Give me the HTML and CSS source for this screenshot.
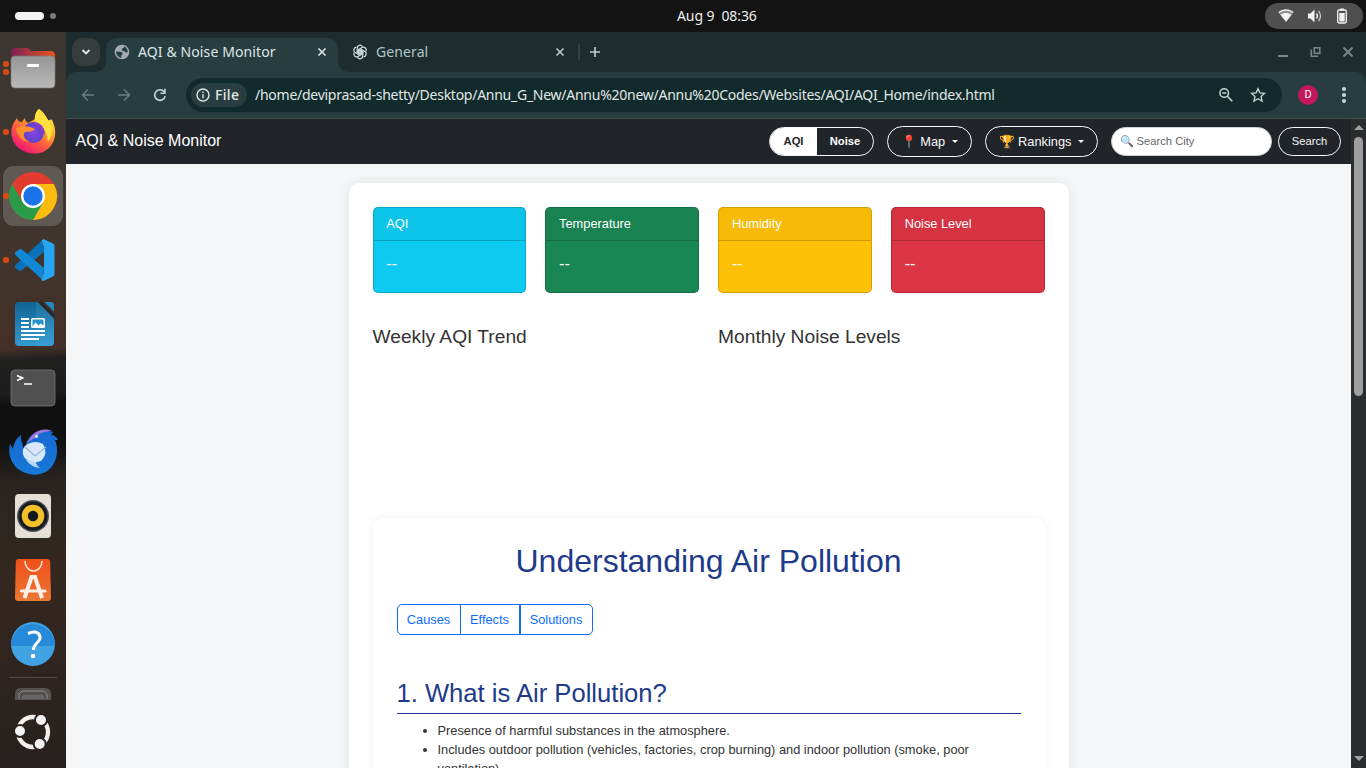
FILE: index.html
```html
<!DOCTYPE html>
<html lang="en">
<head>
<meta charset="utf-8">
<title>AQI &amp; Noise Monitor</title>
<link rel="stylesheet" href="styles.css">
</head>
<body>
<div class="desktop">
  <header class="topbar">
    <div class="workspaces"><span class="ws-active"></span><span class="ws-dot"></span></div>
    <div class="clock">Aug 9&nbsp; 08:36</div>
    <div class="tray">
      <svg width="16" height="14" viewBox="0 0 16 14"><path d="M.5 3.8C4.5.2 11.500.2 15.500 3.800L8 13Z" fill="#8d8d8d"/><path d="M.8 3.500C4.800.200 11.200.200 15.200 3.500" fill="none" stroke="#f2f2f2" stroke-width="1.400"/><path d="M2.500 5.800C5.500 3.300 10.500 3.300 13.500 5.800L8 12.800Z" fill="#f2f2f2"/></svg>
      <svg width="16" height="16" viewBox="0 0 16 16" fill="none" stroke="#f2f2f2" stroke-width="1.300"><path d="M1 5.500h2.500L7.500 1.500v13L3.500 10.500H1Z" fill="#f2f2f2" stroke="none"/><path d="M9.500 5.500q2 2.500 0 5"/><path d="M11.500 2.800q4 5.200 0 10.400" opacity=".75"/></svg>
      <svg width="12" height="16" viewBox="0 0 12 16"><path d="M4 .5h4v2H4z" fill="#f2f2f2"/><rect x="1.700" y="2" width="8.600" height="13" rx="1.500" fill="none" stroke="#f2f2f2" stroke-width="1.300"/><rect x="3.300" y="5" width="5.400" height="8.500" fill="#f2f2f2"/></svg>
    </div>
  </header>

  <div class="workspace">
    <nav class="dock">
      <div class="app run2"><svg viewBox="0 0 60 60">
        <defs><linearGradient id="fo"><stop stop-color="#7b2152"/><stop offset="1" stop-color="#e95420"/></linearGradient><linearGradient id="fg" x2="0" y2="1"><stop stop-color="#969696"/><stop offset="1" stop-color="#b9b9b9"/></linearGradient></defs>
        <path d="M8 14q0-4 4-4h13l3 3h20q4 0 4 5v8H8Z" fill="url(#fo)"/><rect x="8" y="18" width="44" height="32" rx="4" fill="url(#fg)" stroke="#7f7c7a" stroke-width=".7"/><rect x="24" y="26" width="12" height="3" rx="1.200" fill="#fff"/></svg></div>
      <div class="app run"><svg viewBox="0 0 60 60">
        <defs><linearGradient id="ff" x1=".9" y1=".1" x2=".3" y2="1"><stop stop-color="#fff04a"/><stop offset=".3" stop-color="#ffb52e"/><stop offset=".6" stop-color="#ff633b"/><stop offset="1" stop-color="#f01477"/></linearGradient><radialGradient id="fp"><stop stop-color="#8845e6"/><stop offset="1" stop-color="#5b43c5"/></radialGradient></defs>
        <g transform="translate(-1 -1)"><path d="M37 8C42 12 44 16 46 19C49 20 49 17 50 19C57 33 52 46 41 51C27 56 12 48 10 36C8 28 11 22 15 17C16 20 17 21 20 21C21 19 22 18 23 17C23 19 24 21 26 22C30 20 31 19 33 18C33 14 34 10 37 8Z" fill="url(#ff)"/>
        <path d="M37 8C43 12 44 16 46 19C50 24 52 33 46 41C45 30 41 25 33 20C32 16 34 10 37 8Z" fill="#ffe040"/>
        <circle cx="31.500" cy="31.500" r="10.500" fill="url(#fp)"/>
        <path d="M14 27C20 24 28 25 33 28C30 32 26 30 23 31C20 34 23 39 28 41C20 41 15 35 14 27Z" fill="#ff8f2a"/><path d="M31 22C38 21 43 26 43 34C40 29 37 26 31 22Z" fill="#9038c8"/></g></svg></div>
      <div class="app run focused"><svg viewBox="0 0 60 60">
        <circle cx="30" cy="30" r="24" fill="#e33b2e"/><path d="M30 18H50.800A24 24 0 0 1 30 54Z" fill="#fbbc0f"/><path d="M9.200 18A24 24 0 0 0 30 54L40.400 36L19.600 36Z" fill="#2a9b48"/><circle cx="30" cy="30" r="12" fill="#fff"/><circle cx="30" cy="30" r="9.700" fill="#1a73e8"/></svg></div>
      <div class="app run"><svg viewBox="0 0 60 60">
        <path d="M40 9.500L12.500 35q-1.500 1.500 0 3L16 40.500q1.200 1 2.500 0L41 22Z" fill="#0a72bb"/><path d="M40 50.500L12.500 25q-1-1.500 0-3L16 19.500q1.500-1 3 0L41 38Z" fill="#1088d4"/><path d="M40.500 9L50 13.500q1.500.7 1.500 2.500v28q0 1.800-1.500 2.500L40.500 51q-1.500 0-2-1L41 43V17L38.500 10.500Z" fill="#28a4f2"/></svg></div>
      <div class="app"><svg viewBox="0 0 60 60">
        <defs><linearGradient id="wd" x2="0" y2="1"><stop stop-color="#116494"/><stop offset="1" stop-color="#339bd0"/></linearGradient></defs>
        <path d="M16 8H34L51 25V48q0 4-4 4H16q-4 0-4-4V12q0-4 4-4Z" fill="url(#wd)"/><path d="M33 8h2.500L51 23.500V48q0 4-4 4H33Z" fill="#52addc" opacity=".2"/><path d="M34.500 7.500L51.500 24.500V21L38.500 8Z" fill="#1c2a33"/><path d="M41.500 8h6q3.500 0 3.500 3.500v6Z" fill="#2389c2"/><path d="M18 25h8M18 29h8M18 33h8M18 37h24M18 41h24M18 45h18" stroke="#fff" stroke-width="2"/><rect x="28" y="24" width="14" height="10" rx="1.500" fill="#fff"/><path d="M29.500 32.500V25.500H40.500v6l-3-2-2 2-3-3Z" fill="#2594cc"/></svg></div>
      <div class="app"><svg viewBox="0 0 60 60">
        <rect x="8" y="12" width="44" height="36" rx="4" fill="#505050" stroke="#737373" stroke-width=".8"/><path d="M14 17.500l5.500 2.500-5.500 2.500M21 26h8" fill="none" stroke="#fff" stroke-width="1.700"/></svg></div>
      <div class="app"><svg viewBox="0 0 60 60">
        <defs><linearGradient id="tb" x2="0" y2="1"><stop stop-color="#1769d2"/><stop offset="1" stop-color="#1778d8"/></linearGradient></defs>
        <path d="M23 23C26 11 38 5 50 10L48 13C51 13 54 15 55 18L52 18C55 25 55 35 50 43C44 52 33 55 23 51C10 47 4 34 7 22L10 27C11 19 15 15 18 13C17 19 20 20 20 26L24 22Z" fill="url(#tb)"/>
        <path d="M26 18C30 9 41 5 49 9C42 9 36 11 32 16L23 21Q24 19 26 18Z" fill="#9878dc"/><path d="M22 24Q31 17 40 22Q46 31 38 39Q27 43 21 35Q18 29 22 24Z" fill="#d9e9fa"/><path d="M22 25l10 9 11-9" fill="none" stroke="#95b5da" stroke-width="1.300"/><path d="M23 38Q28 45 37 46Q33 43 33 40Z" fill="#b9d6f7"/><circle cx="33.500" cy="14.500" r="1.400" fill="#fff"/></svg></div>
      <div class="app"><svg viewBox="0 0 60 60">
        <rect x="12" y="8" width="36" height="44" rx="4" fill="#e4e0d5"/><circle cx="30" cy="30" r="16" fill="#4a4c52"/><circle cx="30" cy="30" r="14.500" fill="#171a20"/><circle cx="30" cy="30" r="11.300" fill="#f1c129"/><circle cx="30" cy="30" r="5.200" fill="#16181c"/></svg></div>
      <div class="app"><svg viewBox="0 0 60 60">
        <defs><linearGradient id="bg" x2="0" y2="1"><stop stop-color="#f04f19"/><stop offset="1" stop-color="#e97835"/></linearGradient></defs>
        <path d="M16 9H44q3 0 3.200 3L48 48q0 3-3 3H15q-3 0-3-3L12.800 12q.2-3 3.200-3Z" fill="url(#bg)"/><path d="M22 11a8.500 10 0 0 0 17 0" fill="none" stroke="#ffe4d4" stroke-width="1.600"/><path d="M21.500 48L28.500 27h3.500L39 48" fill="none" stroke="#fff1e7" stroke-width="4"/><path d="M18.500 41H42" stroke="#fff1e7" stroke-width="3.200" stroke-linecap="round"/></svg></div>
      <div class="app"><svg viewBox="0 0 60 60">
        <circle cx="30" cy="30" r="22" fill="#3fa3e4"/><path d="M8 32a22 22 0 1 1 44 0Z" fill="#278ad8"/><path d="M25 19.500q10-4 12 3c1 6-7 7-6.500 13.500" fill="none" stroke="#fff" stroke-width="3"/><circle cx="30" cy="42" r="2.300" fill="#fff"/></svg></div>
      <div class="dock-line"></div>
      <svg class="drive" viewBox="0 0 36 12"><path d="M0 12V6q0-6 6-6H30q6 0 6 6v6Z" fill="#555350"/><path d="M4 11V6l3-3H29l3 3v5" fill="none" stroke="#8a8986" stroke-width="1"/><path d="M6 11V9l3-3H27l3 3v2" fill="#696764" stroke="#4c4a48" stroke-width="1"/></svg>
      <svg class="ubuntu" viewBox="0 0 40 40"><circle cx="20" cy="20" r="15" fill="none" stroke="#f2f0ef" stroke-width="4.300"/><g fill="#f3f3f3" stroke="#2a231f" stroke-width="2"><circle cx="7" cy="19" r="6"/><circle cx="28" cy="8" r="6"/><circle cx="26.700" cy="32" r="6"/></g></svg>
    </nav>

    <main class="browser">
      <div class="tabstrip">
        <div class="tab-search"><svg width="10" height="8" viewBox="0 0 10 8"><path d="M1.500 2L5 5.500 8.500 2" fill="none" stroke="#e3e6e6" stroke-width="1.900"/></svg></div>
        <div class="tab active">
          <svg class="fav" viewBox="1 1 22 22"><path d="M12 2C6.480 2 2 6.480 2 12s4.480 10 10 10 10-4.480 10-10S17.520 2 12 2zm-1 17.930c-3.950-.49-7-3.850-7-7.930 0-.3 0-.5.050-.8L9 11.500c2 0 4 1 4 2.500 0 1-2 2-2 3.500zM20 12c-1 1-3 .500-4-.5-1-1-3-.500-4-1.500-1-1.500 0-2 1-3 1-.8 2-1 2-2.410C17.930 5.780 20 8.650 20 12z" fill="#a3abb2"/></svg>
          <span class="tab-title t1">AQI &amp; Noise Monitor</span>
          <svg class="close" viewBox="0 0 10 10"><path d="M1.500 1.500l7 7m0-7l-7 7" stroke="#e2e8e8" stroke-width="1.600"/></svg>
        </div>
        <div class="tab">
          <svg class="fav" viewBox="0 0 16 16" fill="none" stroke="#d2dbdc" stroke-width="1.250"><g id="petal"><path d="M5.200 8V4a2.800 2.800 0 0 1 5.200-1.400M5.200 8l2.800 1.600 3.500-2"/></g><use href="#petal" transform="rotate(60 8 8)"/><use href="#petal" transform="rotate(120 8 8)"/><use href="#petal" transform="rotate(180 8 8)"/><use href="#petal" transform="rotate(240 8 8)"/><use href="#petal" transform="rotate(300 8 8)"/></svg>
          <span class="tab-title t2">General</span>
          <svg class="close" viewBox="0 0 10 10"><path d="M1.500 1.500l7 7m0-7l-7 7" stroke="#b9cdcf" stroke-width="1.500"/></svg>
        </div>
        <span class="tab-sep"></span>
        <svg class="plus" width="12" height="12" viewBox="0 0 12 12"><path d="M6 1v10M1 6h10" stroke="#c5cdcd" stroke-width="1.600"/></svg>
        <div class="win-buttons">
          <svg width="12" height="12" viewBox="0 0 12 12"><path d="M1 10h10" stroke="#77868a" stroke-width="2"/></svg>
          <svg width="12" height="12" viewBox="0 0 12 12" fill="none" stroke="#77868a" stroke-width="1.600"><rect x="4.300" y="1.800" width="5.500" height="5.500"/><path d="M1.300 3.500V10.200H8"/></svg>
          <svg width="12" height="12" viewBox="0 0 12 12"><path d="M1.500 1.500l9 9m0-9l-9 9" stroke="#77868a" stroke-width="1.900"/></svg>
        </div>
      </div>

      <div class="toolbar">
        <div class="nav-icons">
          <svg width="16" height="16" viewBox="0 0 16 16"><path d="M14 8H3M8 2.500L2.500 8 8 13.500" fill="none" stroke="#6b7c80" stroke-width="1.500"/></svg>
          <svg width="16" height="16" viewBox="0 0 16 16"><path d="M2 8h11M8 2.500L13.500 8 8 13.500" fill="none" stroke="#6b7c80" stroke-width="1.500"/></svg>
          <svg width="16" height="16" viewBox="0 0 16 16"><path d="M13.200 9.200A5.300 5.300 0 1 1 12.200 4.800" fill="none" stroke="#c3d5d7" stroke-width="1.600"/><path d="M13.700 1.800V7H8.500V5.400h3.600V1.800Z" fill="#c3d5d7"/></svg>
        </div>
        <div class="omnibox">
          <div class="chip"><svg width="14" height="14" viewBox="0 0 14 14"><circle cx="7" cy="7" r="6" fill="none" stroke="#dfe7e7" stroke-width="1.400"/><path d="M7 6.200V10.300M7 3.600V5.100" stroke="#dfe7e7" stroke-width="1.400"/></svg><span>File</span></div>
          <span class="url">/home/deviprasad-shetty/Desktop/Annu_G_New/Annu%20new/Annu%20Codes/Websites/AQI/AQI_Home/index.html</span>
          <svg width="16" height="16" viewBox="0 0 16 16" fill="none" stroke="#c3d2d3" stroke-width="1.600"><circle cx="6.200" cy="6" r="4.300"/><path d="M9.300 9.200l5 5M4.200 6h4"/></svg>
          <svg width="16" height="16" viewBox="0 0 16 16"><path d="M8 1.700l1.900 4.200 4.500.5-3.300 3.100.9 4.600L8 11.700l-4 2.400.9-4.600L1.600 6.400l4.500-.5Z" fill="none" stroke="#c3d2d3" stroke-width="1.400"/></svg>
        </div>
        <div class="avatar">D</div>
        <div class="kebab"><i></i><i></i><i></i></div>
      </div>

      <div class="viewport">
        <div class="page">
          <div class="navbar">
            <span class="brand">AQI &amp; Noise Monitor</span>
            <div class="toggle"><span class="on">AQI</span><span>Noise</span></div>
            <div class="pill map">📍 Map<i></i></div>
            <div class="pill rank">🏆 Rankings<i></i></div>
            <div class="search-field">🔍 Search City</div>
            <div class="search-btn">Search</div>
          </div>
          <div class="content">
            <div class="cards">
              <div class="card info"><div class="card-head">AQI</div><div class="card-body">--</div></div>
              <div class="card success"><div class="card-head">Temperature</div><div class="card-body">--</div></div>
              <div class="card warning"><div class="card-head">Humidity</div><div class="card-body">--</div></div>
              <div class="card danger"><div class="card-head">Noise Level</div><div class="card-body">--</div></div>
            </div>
            <div class="charts"><h5>Weekly AQI Trend</h5><h5>Monthly Noise Levels</h5></div>
            <section class="article">
              <h2>Understanding Air Pollution</h2>
              <div class="btn-group"><span>Causes</span><span>Effects</span><span>Solutions</span></div>
              <h3>1. What is Air Pollution?</h3>
              <ul>
                <li>Presence of harmful substances in the atmosphere.</li>
                <li>Includes outdoor pollution (vehicles, factories, crop burning) and indoor pollution (smoke, poor ventilation).</li>
              </ul>
            </section>
          </div>
        </div>
        <div class="scrollbar"><i class="up"></i><i class="thumb"></i><i class="down"></i></div>
      </div>
    </main>
  </div>
</div>
</body>
</html>
```
FILE: styles.css
```css
* { box-sizing: border-box; }
body { margin: 0; overflow: hidden; font-family: "Liberation Sans", Arial, sans-serif; }
svg { display: block; flex: none; }
.desktop { width: 1366px; height: 768px; display: flex; flex-direction: column; overflow: hidden; }

.topbar { height: 32px; flex: none; background: #131313; display: grid; grid-template-columns: 1fr 80px 1fr; align-items: center; color: #ededed; }
.workspaces { display: flex; align-items: center; gap: 6px; padding-left: 15px; }
.ws-active { width: 29px; height: 8px; border-radius: 4px; background: #f2f2f2; }
.ws-dot { width: 6px; height: 6px; border-radius: 50%; background: #7d7d7d; }
/* the clock is centred on the area right of the dock */
.clock { font: 14px "Noto Sans", sans-serif; letter-spacing: -.1px; white-space: pre; margin: 0 -34px 0 34px; padding-bottom: 2px; }
.tray { justify-self: end; margin-right: 3px; width: 98px; height: 26px; border-radius: 13px; background: #4f4f4f; display: flex; align-items: center; padding-left: 13px; gap: 13px; }

.workspace { flex: 1; display: flex; min-height: 0; }
.dock { width: 66px; flex: none; padding: 6px 3px 0; display: flex; flex-direction: column; gap: 4px; align-items: center;
  background: linear-gradient(177deg, #3c3733 0, #40352e 28%, #442f27 43%, #20201f 44.500%, #1c1c1c 49%, #101010 50.500%, #111 56%, #292421 61%, #342820 73%, #30251f 85%, #25211f 100%); }
.app { width: 60px; height: 60px; flex: none; border-radius: 11px; position: relative; }
.app svg { width: 60px; height: 60px; }
.focused { background: #5f5954; }
.run::before, .run2::before { content: ""; position: absolute; left: 0; top: 27px; width: 5.500px; height: 5.500px; border-radius: 50%; background: #dc4814; }
.run2::before { top: 23px; box-shadow: 0 8px #dc4814; }
.dock-line { width: 48px; height: 1px; background: #534c48; margin-bottom: 6px; margin-top: -1px; flex: none; }
.drive { width: 36px; height: 12px; }
.ubuntu { width: 40px; height: 40px; margin-top: 8px; }

.browser { flex: 1; min-width: 0; display: flex; flex-direction: column; background: #1c2c2f; }
.tabstrip { height: 40px; flex: none; display: flex; align-items: center; background: #1c2c2f; padding-left: 6px; }
.tab-search { width: 28px; height: 28px; border-radius: 10px; background: #363d3c; display: grid; place-items: center; margin-right: 6px; }
.tab { height: 34px; margin-top: 6px; padding: 0 11px 6px 8px; width: 240px; display: flex; align-items: center; color: #b2c8ca; }
.tab.active { width: 232px; background: #283d40; border-radius: 10px 10px 0 0; color: #dfe6e6; position: relative; }
.tab.active::before, .tab.active::after { content: ""; position: absolute; bottom: 0; width: 10px; height: 10px; }
.tab.active::before { left: -10px; background: radial-gradient(circle at 0 0, transparent 9.500px, #283d40 10px); }
.tab.active::after { right: -10px; background: radial-gradient(circle at 100% 0, transparent 9.500px, #283d40 10px); }
.tab:not(.active) { padding-left: 14px; padding-right: 13px; }
.fav { width: 16px; height: 16px; margin-right: 8px; }
.tab-title { font: 14px "Noto Sans", sans-serif; flex: 1; white-space: nowrap; padding-bottom: 2px; }
.t1 { letter-spacing: .11px; }
.t2 { letter-spacing: .1px; }
.close { width: 10px; height: 10px; }
.tab-sep { width: 2px; height: 16px; background: #39403f; margin-right: 10px; margin-left: 0; }
.plus { margin-left: -1px; }
.win-buttons { margin-left: auto; display: flex; gap: 20.500px; padding-right: 12px; }

.toolbar { height: 47px; flex: none; background: #283d40; border-bottom: 1px solid #454f50; border-radius: 10px 10px 0 0; display: flex; align-items: center; padding-left: 14px; }
.nav-icons { display: flex; gap: 20px; width: 106px; }
.omnibox { width: 1096px; height: 34px; border-radius: 17px; background: #112a2c; display: flex; align-items: center; padding: 0 16px 0 5px; gap: 16px; color: #e1e7e6; font: 14px "Noto Sans", sans-serif; }
.chip { width: 56px; height: 24px; border-radius: 12px; background: #283d40; display: flex; align-items: center; gap: 5px; padding-left: 5px; font-weight: 500; flex: none; }
.chip span { letter-spacing: .35px; padding-bottom: 1px; }
.url { flex: 1; margin-left: -8px; white-space: nowrap; letter-spacing: -.26px; padding-bottom: 2px; }
.avatar { width: 20px; height: 20px; border-radius: 50%; background: #c2185b; color: #fff; font: 11px/20px Roboto, sans-serif; text-align: center; margin-left: 16px; }
.kebab { display: flex; flex-direction: column; gap: 2.500px; margin-left: 24px; }
.kebab i { width: 3.500px; height: 3.500px; border-radius: 50%; background: #c3d2d3; }

.viewport { flex: 1; min-height: 0; display: flex; }
.page { flex: 1; overflow: hidden; background: #f4f6f8; color: #333; }
.navbar { height: 45px; background: #212529; display: flex; align-items: center; padding: 0 10px 0 9.600px; color: #fff; }
.brand { font-size: 16px; margin-right: auto; padding-bottom: 2px; }
.toggle { width: 105px; height: 29px; border: 1px solid #f8f9fa; border-radius: 15px; display: flex; overflow: hidden; font: bold 11.200px/27px "Liberation Sans", sans-serif; text-align: center; margin-right: 13px; }
.toggle span { flex: 1; }
.toggle .on { flex: none; width: 47px; background: #fff; color: #212529; }
.pill { height: 31px; border: 1px solid #f8f9fa; border-radius: 16px; display: flex; align-items: center; justify-content: center; font-size: 12.800px; margin-right: 13px; white-space: nowrap; color: #f8f9fa; }
.pill i { border: 3.500px solid transparent; border-top: 3.500px solid #f8f9fa; border-bottom: 0; margin-left: 7px; }
.map { width: 85px; }
.rank { width: 113px; }
.search-field { width: 161px; height: 29px; border-radius: 15px; background: #fff; border: 1px solid #ced4da; color: #5f6468; font-size: 11.200px; line-height: 27px; padding-left: 7.500px; margin-right: 6px; }
.search-btn { width: 63px; height: 29px; border: 1px solid #f8f9fa; border-radius: 15px; font-size: 11.200px; line-height: 27px; text-align: center; color: #f8f9fa; }

.content { width: 720px; margin: 19px 0 0 282.500px; background: #fff; border-radius: 10px; padding: 24px; box-shadow: 0 0 12px rgba(0,0,0,.08); }
.cards { display: grid; grid-template-columns: repeat(4, 1fr); gap: 19.200px; height: 86px; }
.card { border: 1px solid rgba(0,0,0,.176); border-radius: 5px; color: #fff; display: flex; flex-direction: column; overflow: hidden; }
.card-head { height: 33px; flex: none; background: rgba(0,0,0,.03); border-bottom: 1px solid rgba(0,0,0,.176); padding-left: 12.800px; font-size: 12.800px; line-height: 32px; }
.card-body { padding: 13px 12.800px; font-size: 16px; line-height: 19px; }
.info { background: #0dcaf0; }
.success { background: #198754; }
.warning { background: #ffc107; }
.danger { background: #dc3545; }
.charts { display: grid; grid-template-columns: 1fr 1fr; column-gap: 19.200px; margin-top: 32px; height: 193px; }
.charts h5 { margin: 0; font-size: 19.200px; font-weight: 400; line-height: 23px; }
.article { padding: 24px; border-radius: 10px; box-shadow: 0 0 10px rgba(0,0,0,.06); height: 400px; }
h2 { margin: 0; font-size: 32px; line-height: 38px; font-weight: 400; color: #1e3a8a; text-align: center; }
.btn-group { display: flex; width: 196px; height: 31px; margin-top: 24px; border: 1px solid #0d6efd; border-radius: 5px; color: #0d6efd; font-size: 12.800px; line-height: 29px; text-align: center; }
.btn-group span:nth-child(1) { width: 63px; border-right: 1px solid #0d6efd; }
.btn-group span:nth-child(2) { width: 60px; border-right: 2px solid #0d6efd; }
.btn-group span:nth-child(3) { flex: 1; }
h3 { margin: 43px 0 7px; height: 36px; font-size: 25.600px; line-height: 31px; font-weight: 400; color: #1e3a8a; border-bottom: 1px solid #1e3a8a; }
ul { margin: 0; padding-left: 41px; font-size: 12.800px; line-height: 19.200px; }

.scrollbar { width: 15px; background: #2b2c2d; display: flex; flex-direction: column; align-items: center; padding: 6px 0 7px; }
.scrollbar .up { border: 5px solid transparent; border-bottom: 5px solid #a0a0a0; border-top: 0; }
.scrollbar .down { border: 5px solid transparent; border-top: 5px solid #a0a0a0; border-bottom: 0; margin-top: auto; }
.scrollbar .thumb { width: 9px; height: 259px; border-radius: 5px; background: #9e9e9e; margin-top: 7px; }
```
